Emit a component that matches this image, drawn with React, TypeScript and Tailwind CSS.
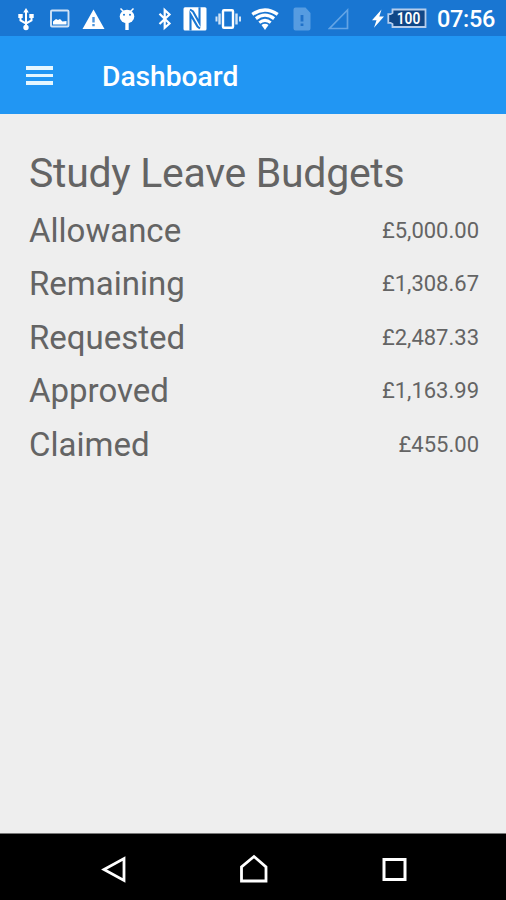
import React from 'react';

interface BudgetLine {
  label: string;
  amount: string;
}

const budgetLines: BudgetLine[] = [
  { label: 'Allowance', amount: '£5,000.00' },
  { label: 'Remaining', amount: '£1,308.67' },
  { label: 'Requested', amount: '£2,487.33' },
  { label: 'Approved', amount: '£1,163.99' },
  { label: 'Claimed', amount: '£455.00' },
];

const UsbIcon: React.FC = () => (
  <svg width="16" height="24" viewBox="0 0 16 24" className="ml-[18px]" fill="none" stroke="currentColor" strokeWidth="2">
    <path d="M8 4v16M2.500 9v4.500L8 16.500l5.500-3V9" />
    <path d="M8 1l2.800 4.500H5.200zM8 17.800a2.700 2.700 0 1 1 0 5.400 2.700 2.700 0 0 1 0-5.400zM.3 7h4.400v4H.3zM11.300 7h4.400v4h-4.400z" fill="currentColor" stroke="none" />
  </svg>
);

const ImageIcon: React.FC = () => (
  <svg width="20" height="24" viewBox="0 0 20 24" className="ml-4" fill="none" stroke="currentColor">
    <rect x="1" y="3.500" width="17.500" height="16" rx="1" strokeWidth="1.900" className="opacity-80" />
    <path d="M3 17.500v-3l3-2.500 2 1 2-1 2.500 2.500 4-.5v3.500z" fill="currentColor" stroke="none" />
  </svg>
);

const WarningIcon: React.FC = () => (
  <svg width="23" height="24" viewBox="0 0 23 24" className="ml-3">
    <path d="M11.500 2.500L22.500 22H.5z" fill="currentColor" />
    <path d="M11.500 10v5.500M11.500 17v2.200" stroke="#4a93dc" strokeWidth="2.400" />
  </svg>
);

const AndroidIcon: React.FC = () => (
  <svg width="16" height="24" viewBox="0 0 16 24" className="ml-3.5">
    <path d="M1.500 1.500l3.500 3.500M14.500 1.500L11 5" stroke="currentColor" strokeWidth="1.500" />
    <ellipse cx="8" cy="9.500" rx="7.300" ry="6.800" fill="currentColor" />
    <path d="M8 16v7" stroke="currentColor" strokeWidth="3.400" />
    <circle cx="5" cy="7.800" r="1" fill="#1976d2" />
    <circle cx="11" cy="7.800" r="1" fill="#1976d2" />
  </svg>
);

const BluetoothIcon: React.FC = () => (
  <svg width="14" height="24" viewBox="0 0 14 24" className="ml-[23px]" fill="none" stroke="currentColor" strokeWidth="2.200">
    <path d="M1.500 6.800l10 9.700-4.800 4.300V3l4.800 4.500-10 9.500" />
  </svg>
);

const NfcIcon: React.FC = () => (
  <svg width="24" height="24" viewBox="0 0 24 24" className="ml-[11px]">
    <rect x=".5" y=".3" width="23" height="23.200" rx="1.500" fill="currentColor" />
    <path d="M7.500 23.500V7.500L14.500 19.500 17 21.500" fill="none" stroke="#1976d2" strokeWidth="2.100" />
    <path d="M16.500 .3V16L10 4.500 7 2.500" fill="none" stroke="#1976d2" strokeWidth="2.100" />
  </svg>
);

const VibrateIcon: React.FC = () => (
  <svg width="27" height="24" viewBox="0 0 27 24" className="ml-2" fill="none" stroke="currentColor">
    <rect x="8" y="3.300" width="10" height="17.400" rx="1" strokeWidth="2.400" />
    <path d="M4.500 6.500v11M21.500 6.500v11" strokeWidth="2.400" className="opacity-80" />
    <path d="M1.500 9.500v5M25 9.500v5" strokeWidth="2" className="opacity-80" />
  </svg>
);

const WifiIcon: React.FC = () => (
  <svg width="28" height="24" viewBox="0 0 28 24" className="ml-[9px]" fill="none" stroke="currentColor">
    <path d="M1.300 7.400Q14-1.500 26.700 7.400" strokeWidth="3.400" />
    <path d="M4.900 11.600Q14 4.800 23.100 11.600" strokeWidth="3.200" />
    <path d="M8.300 15.600Q14 11.200 19.700 15.600" strokeWidth="3" />
    <path d="M14 16.700q2 0 3.500 1.200L14 23l-3.500-5.100Q12 16.700 14 16.700z" fill="currentColor" stroke="none" />
  </svg>
);

const SimAlertIcon: React.FC = () => (
  <svg width="18" height="24" viewBox="0 0 18 24" className="ml-3.5">
    <path d="M2.500.5h10L17.500 6v15.500a2 2 0 0 1-2 2h-13a2 2 0 0 1-2-2v-19a2 2 0 0 1 2-2z" fill="#569ce1" />
    <path d="M9 8v6.500M9 16.500V19" stroke="#1f71c9" strokeWidth="2.800" />
  </svg>
);

const SignalIcon: React.FC = () => (
  <svg width="22" height="24" viewBox="0 0 22 24" className="ml-[17px]" fill="none">
    <path d="M19.500 3v18.500H1.500z" stroke="#63a4e5" strokeWidth="1.700" />
  </svg>
);

const BoltIcon: React.FC = () => (
  <svg width="12" height="24" viewBox="0 0 12 24" className="ml-[22px]" fill="currentColor">
    <path d="M9.500 2.500L0 13.300h4.500L2 20.800 12 9.500H7.300z" />
  </svg>
);

const BatteryIcon: React.FC = () => (
  <svg width="41" height="24" viewBox="0 0 41 24" className="ml-[3px]">
    <path d="M5.500 2.500h33v17.500H5.500V17L3.500 15.800H1.300V7.200H3.500L5.500 6z" fill="#104787" stroke="#b5cdec" strokeWidth="1.800" />
    <text x="21.500" y="17" textAnchor="middle" fill="#fff" fontSize="16" fontWeight="600" textLength="23.500" lengthAdjust="spacingAndGlyphs">
      100
    </text>
  </svg>
);

const StatusBar: React.FC = () => (
  <header className="flex h-9 shrink-0 items-center bg-[#1976d2] pt-0.5 text-white">
    <UsbIcon />
    <ImageIcon />
    <WarningIcon />
    <AndroidIcon />
    <BluetoothIcon />
    <NfcIcon />
    <VibrateIcon />
    <WifiIcon />
    <SimAlertIcon />
    <SignalIcon />
    <BoltIcon />
    <BatteryIcon />
    <span className="ml-[9px] pt-0.5 text-[23.5px] leading-none font-medium tracking-[-0.3px] whitespace-nowrap">07:56</span>
  </header>
);

const AppBar: React.FC = () => (
  <div className="flex h-[78px] shrink-0 items-center bg-[#2196f3] pt-px pl-[26px] text-white">
    <button type="button" aria-label="Menu" className="flex w-[27px] flex-col gap-1">
      <span className="h-[3.5px] bg-[#e4f6ff]" />
      <span className="h-[3.5px] bg-[#e4f6ff]" />
      <span className="h-[3.5px] bg-[#e4f6ff]" />
    </button>
    <h1 className="ml-[49px] pt-1 text-[28.2px] leading-none font-medium">Dashboard</h1>
  </div>
);

const NavigationBar: React.FC = () => (
  <nav className="flex h-[67px] shrink-0 items-center border-t border-[#777] bg-black pt-1.5 pl-[100px] text-white">
    <svg width="28" height="32" viewBox="0 0 28 32" fill="none" stroke="currentColor" strokeWidth="2.8">
      <path d="M24 4.500v22L4 15.500z" />
    </svg>
    <svg width="32" height="32" viewBox="0 0 32 32" className="ml-[110px]" fill="none" stroke="currentColor" strokeWidth="2.8">
      <path d="M3.500 27v-14L16 2.500l12 10.500v14z" />
    </svg>
    <svg width="28" height="32" viewBox="0 0 28 32" className="ml-[110px]" fill="none" stroke="currentColor" strokeWidth="3">
      <path d="M4 5.500h21v20H4z" />
    </svg>
  </nav>
);

const App: React.FC = () => {
  return (
    <div className="flex h-[900px] w-[506px] flex-col overflow-hidden bg-[#eeeeee] font-[Roboto,sans-serif]">
      <StatusBar />
      <AppBar />
      <main className="flex-1 pt-[35px] pr-[27px] pl-[29px] text-[#646464]">
        <h2 className="text-[41px] leading-[48px] tracking-[-0.3px] whitespace-nowrap">Study Leave Budgets</h2>
        <ul className="mt-[7px]">
          {budgetLines.map((line) => (
            <li key={line.label} className="flex h-[53.4px] items-start justify-between">
              <span className="text-[33px] leading-[54px]">{line.label}</span>
              <span className="text-[22px] leading-[54px]">{line.amount}</span>
            </li>
          ))}
        </ul>
      </main>
      <NavigationBar />
    </div>
  );
};

export default App;
